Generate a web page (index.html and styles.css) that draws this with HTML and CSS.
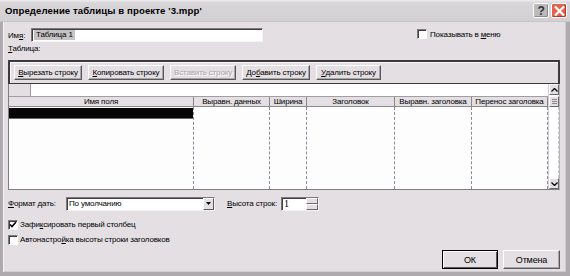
FILE: index.html
```html
<!DOCTYPE html>
<html lang="ru">
<head>
<meta charset="utf-8">
<link rel="stylesheet" href="styles.css">
</head>
<body>
<div class="window">
  <div class="titlebar">
    <span class="title">Определение таблицы в проекте '3.mpp'</span>
    <div class="tbtns">
      <span class="tbtn help">?</span>
      <span class="tbtn close"><svg width="13" height="12" viewBox="0 0 13 12"><path d="M2 1.5 L11 10.5 M11 1.5 L2 10.5" stroke="#fff" stroke-width="2.2" fill="none"/></svg></span>
    </div>
  </div>
  <div class="body">
    <div class="name-row">
      <span class="lbl">Им<u>я</u>:</span>
      <div class="field name-field"><span class="sel">Таблица 1</span></div>
      <span class="chk"><span class="box"></span><span>Показывать в <u>м</u>еню</span></span>
    </div>
    <div class="lbl tbl-lbl"><u>Т</u>аблица:</div>
    <div class="toolbar">
      <span class="btn w68"><span><u>В</u>ырезать строку</span></span>
      <span class="btn w76"><span><u>К</u>опировать строку</span></span>
      <span class="btn w66 disabled"><span>Вставить строку</span></span>
      <span class="btn w68"><span>До<u>б</u>авить строку</span></span>
      <span class="btn w65"><span><u>У</u>далить строку</span></span>
    </div>
    <div class="gridbox">
      <div class="gridmain">
        <div class="editrow"><div class="corner"></div><div class="edit"></div></div>
        <div class="cols head">
          <span>Имя поля</span><span>Выравн. данных</span><span>Ширина</span><span>Заголовок</span><span>Выравн. заголовка</span><span>Перенос заголовка</span>
        </div>
        <div class="cols rows">
          <span class="c1"><i class="selrow"></i></span><span></span><span></span><span></span><span></span><span></span>
        </div>
      </div>
      <div class="scroll">
        <span class="arr"><svg width="7" height="4" viewBox="0 0 7 4"><path d="M0.5 3.5 L3.5 0.5 L6.5 3.5" stroke="#000" stroke-width="1.3" fill="none"/></svg></span>
        <span class="thumb"><i></i><i></i><i></i></span>
        <span class="track"></span>
        <span class="arr"><svg width="7" height="4" viewBox="0 0 7 4"><path d="M0.5 0.5 L3.5 3.5 L6.5 0.5" stroke="#000" stroke-width="1.3" fill="none"/></svg></span>
      </div>
    </div>
    <div class="fmt-row">
      <span class="lbl fmt-lbl"><u>Ф</u>ормат дать:</span>
      <div class="field select"><span class="val">По умолчанию</span><span class="drop"><svg width="5" height="3" viewBox="0 0 5 3"><path d="M0 0 H5 L2.5 3Z" fill="#000"/></svg></span></div>
      <span class="lbl hgt"><u>В</u>ысота строк:</span>
      <div class="field spin"><span class="val">1</span><span class="spinbtns"><span></span><span></span></span></div>
    </div>
    <div class="chk chk1"><span class="box checked"><svg width="8" height="7" viewBox="0 0 8 7"><path d="M1 3.5 L3 5.5 L7 1" stroke="#000" stroke-width="1.6" fill="none"/></svg></span><span>Зафи<u>к</u>сировать первый столбец</span></div>
    <div class="chk chk2"><span class="box"></span><span>Автонастро<u>й</u>ка высоты строки заголовков</span></div>
    <div class="actions">
      <span class="btn ok"><span>ОК</span></span>
      <span class="btn cancel"><span>Отмена</span></span>
    </div>
  </div>
</div>
</body>
</html>
```
FILE: styles.css
```css
* { box-sizing: border-box; }
html, body { margin: 0; padding: 0; }
body {
  width: 570px; height: 276px; overflow: hidden;
  font-family: "Liberation Sans", Arial, sans-serif;
  font-size: 8px; letter-spacing: -0.15px; color: #000;
  background: #e3dfe3;
}
u { text-decoration: underline; }
.window {
  width: 570px; height: 276px;
  background: #e3dfe3;
  border-left: 3px solid #aeaaae;
  border-right: 4px solid #aeaaae;
  border-bottom: 4px solid #aeaaae;
  display: flex; flex-direction: column;
  box-shadow: inset 1px 0 0 #f4f2f4, inset -1px -1px 0 #d0ccd0;
}
.titlebar {
  height: 22px; flex-shrink: 0; margin: 0 -4px 0 -3px;
  background: linear-gradient(#eeecee 0, #d9d6d9 3px, #d3d0d3 100%);
  border-bottom: 1px solid #c8c4c8;
  display: flex; align-items: center; justify-content: space-between;
  padding: 0 3px 0 5px;
}
.title { font-weight: bold; font-size: 9.6px; letter-spacing: 0.1px; }
.tbtns { display: flex; gap: 2px; }
.tbtn {
  width: 16px; height: 15px; display: flex; align-items: center; justify-content: center;
  border-radius: 2px;
}
.help { background: #bdbabd; border: 1px solid #fff; color: #303030; font-weight: bold; font-size: 12px; box-shadow: inset -1px -1px 0 #8c8a8c; }
.close { background: #e3614b; border: 1px solid #fff; box-shadow: inset -1px -1px 0 #b03c2c; }
.body { flex: 1; padding: 6px 6px 0 5px; display: flex; flex-direction: column; }
.body > * { flex-shrink: 0; }
.name-row { display: flex; align-items: center; height: 14px; }
.name-row .lbl { width: 23px; }
.field {
  background: #fff; border: 1px solid; border-color: #7c7a7c #f4f4f4 #f4f4f4 #7c7a7c;
  box-shadow: inset 1px 1px 0 #404040; height: 14px; display: flex; align-items: center;
}
.name-field { width: 232px; padding-left: 2px; }
.sel { background: #c6c3c6; padding: 0 2px; height: 10px; line-height: 10px; }
.chk { display: flex; align-items: center; gap: 3px; }
.name-row .chk { margin-left: 154px; margin-top: -2px; }
.box {
  width: 10px; height: 10px; background: #fff;
  border: 1px solid; border-color: #7c7a7c #fff #fff #7c7a7c;
  box-shadow: inset 1px 1px 0 #404040;
  display: flex; align-items: center; justify-content: center;
}
.tbl-lbl { margin-top: 2px; height: 10px; }
.toolbar {
  margin-top: 6px; height: 24px; width: 552px;
  border: 2px solid #3c3a3c; border-bottom-width: 1px;
  display: flex; align-items: center; gap: 6px; padding: 0 0 0 4px;
  box-shadow: inset 1px 1px 0 #fafafa;
}
.btn {
  height: 15px; display: flex; align-items: center; justify-content: center;
  background: #e3dfe3; border: 1px solid; border-color: #fff #5a585a #5a585a #fff;
  box-shadow: inset -1px -1px 0 #a8a5a8; white-space: nowrap;
}
.w68 { width: 68px; } .w76 { width: 76px; } .w66 { width: 66px; } .w65 { width: 65px; }
.disabled { color: #a8a6a8; text-shadow: 1px 1px 0 #fff; }
.gridbox {
  width: 552px; height: 106px; display: flex;
  border: 1px solid #807e80; border-top: none; border-right-color: #b8b6b8;
}
.gridmain { flex: 1; display: flex; flex-direction: column; }
.editrow { display: flex; height: 12px; }
.corner { width: 22px; background: #e3dfe3; border-right: 1px solid #9a989a; }
.edit { flex: 1; background: #fff; }
.cols { display: grid; grid-template-columns: 185px 76px 37px 88px 77px 76px; }
.head { height: 11px; background: #e3dfe3; border-top: 1px solid #a09ea0; border-bottom: 1px solid #8a888a; }
.head span { text-align: center; line-height: 10px; border-right: 1px solid #8a888a; white-space: nowrap; overflow: hidden; }
.rows { flex: 1; background: #fdfdfd; }
.rows span { border-right: 1px dashed #8e8a9a; }
.rows .c1 { padding-top: 1px; }
.selrow { display: block; height: 11px; background: #060606; border-bottom: 1px solid #6a686a; }
.scroll { width: 11px; display: flex; flex-direction: column; background: #fff; border-left: 1px solid #d0ced0; }
.arr {
  height: 11px; flex-shrink: 0; display: flex; align-items: center; justify-content: center;
  background: #e3dfe3; border: 1px solid; border-color: #fff #6a686a #6a686a #fff;
}
.thumb {
  height: 11px; flex-shrink: 0; margin-top: 1px; background: #e3dfe3; border: 1px solid; border-color: #fff #6a686a #6a686a #fff;
  display: flex; flex-direction: column; align-items: center; justify-content: center; gap: 1px;
}
.thumb i { display: block; width: 5px; height: 1px; background: #8a888a; }
.track { flex: 1; border-right: 1px dashed #c8c6c8; }
.fmt-row { display: flex; align-items: center; margin-top: 6px; height: 15px; }
.fmt-lbl { width: 58px; white-space: nowrap; }
.select { width: 149px; padding-left: 2px; justify-content: space-between; }
.drop {
  width: 11px; height: 12px; background: #e3dfe3; border: 1px solid; border-color: #fff #5a585a #5a585a #fff;
  display: flex; align-items: center; justify-content: center;
}
.hgt { margin-left: 12px; margin-right: 4px; white-space: nowrap; }
.spin { width: 38px; padding-left: 2px; justify-content: space-between; font-family: "Liberation Serif", serif; font-size: 10px; }
.spinbtns { width: 12px; height: 12px; display: flex; flex-direction: column; }
.spinbtns span { flex: 1; background: #e3dfe3; border: 1px solid; border-color: #fff #6a686a #6a686a #fff; }
.chk1 { margin-top: 8px; height: 11px; gap: 2px; }
.chk2 { margin-top: 4px; height: 11px; gap: 2px; }
.actions { display: flex; justify-content: flex-end; gap: 5px; margin-top: 5px; }
.actions .btn { height: 19px; font-size: 9px; }
.ok { width: 56px; border: 1px solid #000; box-shadow: inset 1px 1px 0 #fff, inset -1px -1px 0 #5a585a; }
.cancel { width: 57px; }
```
